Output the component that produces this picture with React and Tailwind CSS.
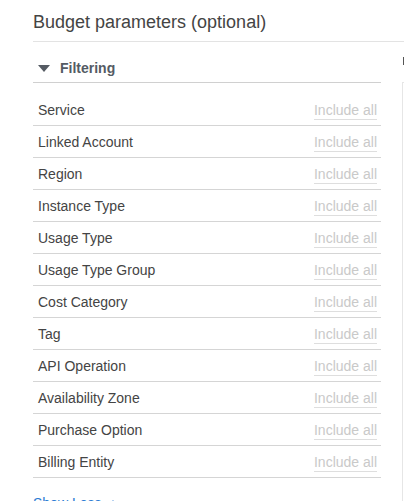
import React from "react";

const filters = [
  "Service",
  "Linked Account",
  "Region",
  "Instance Type",
  "Usage Type",
  "Usage Type Group",
  "Cost Category",
  "Tag",
  "API Operation",
  "Availability Zone",
  "Purchase Option",
  "Billing Entity",
];

function FilterRow({ label }) {
  return (
    <div className="flex h-[32px] items-center justify-between border-b border-[#d5d5d5] pl-[5px] pr-[4px]">
      <span className="text-[14px] leading-[20px] text-[#444444]">{label}</span>
      <span className="mt-[2px] border-b border-[#dedede] text-[14px] leading-[17px] text-[#c9c9c9]">
        Include all
      </span>
    </div>
  );
}

export default function App() {
  return (
    <div
      className="h-[501px] w-[404px] overflow-hidden bg-white pl-[33px]"
      style={{ fontFamily: '"Liberation Sans", Arial, sans-serif' }}
    >
      <h2 className="border-b border-[#e3e3e3] pt-[10px] pb-[7px] text-[18px] leading-[24px] font-normal text-[#444444]">
        Budget parameters (optional)
      </h2>
      <div className="flex">
        <div className="w-[348px] shrink-0">
          <div className="flex items-center border-b border-[#d0d0d0] pt-[16px] pb-[4px] pl-[5px]">
            <svg width="12" height="7" viewBox="0 0 12 7" className="mt-[1px]">
              <path d="M0 0 H12 L6 7 Z" fill="#555b63" />
            </svg>
            <span className="ml-[10px] text-[14px] leading-[20px] font-bold text-[#545b64]">
              Filtering
            </span>
          </div>
          <div className="mt-[11px]">
            {filters.map((f) => (
              <FilterRow key={f} label={f} />
            ))}
          </div>
          <button className="mt-[15px] flex items-center gap-[8px] text-[14px] leading-[20px] text-[#2b7bd3]">
            Show Less
            <svg width="8" height="6" viewBox="0 0 8 6">
              <path d="M0 6 L4 0 L8 6 Z" fill="#2b7bd3" />
            </svg>
          </button>
        </div>
        <div className="ml-[21px] flex flex-1 flex-col">
          <div className="mt-[15px] ml-[1px] h-[8px] w-[2px] bg-[#555555]" />
          <div className="mt-[17px] flex-1 border-t border-l border-[#e6e6e6]" />
        </div>
      </div>
    </div>
  );
}
